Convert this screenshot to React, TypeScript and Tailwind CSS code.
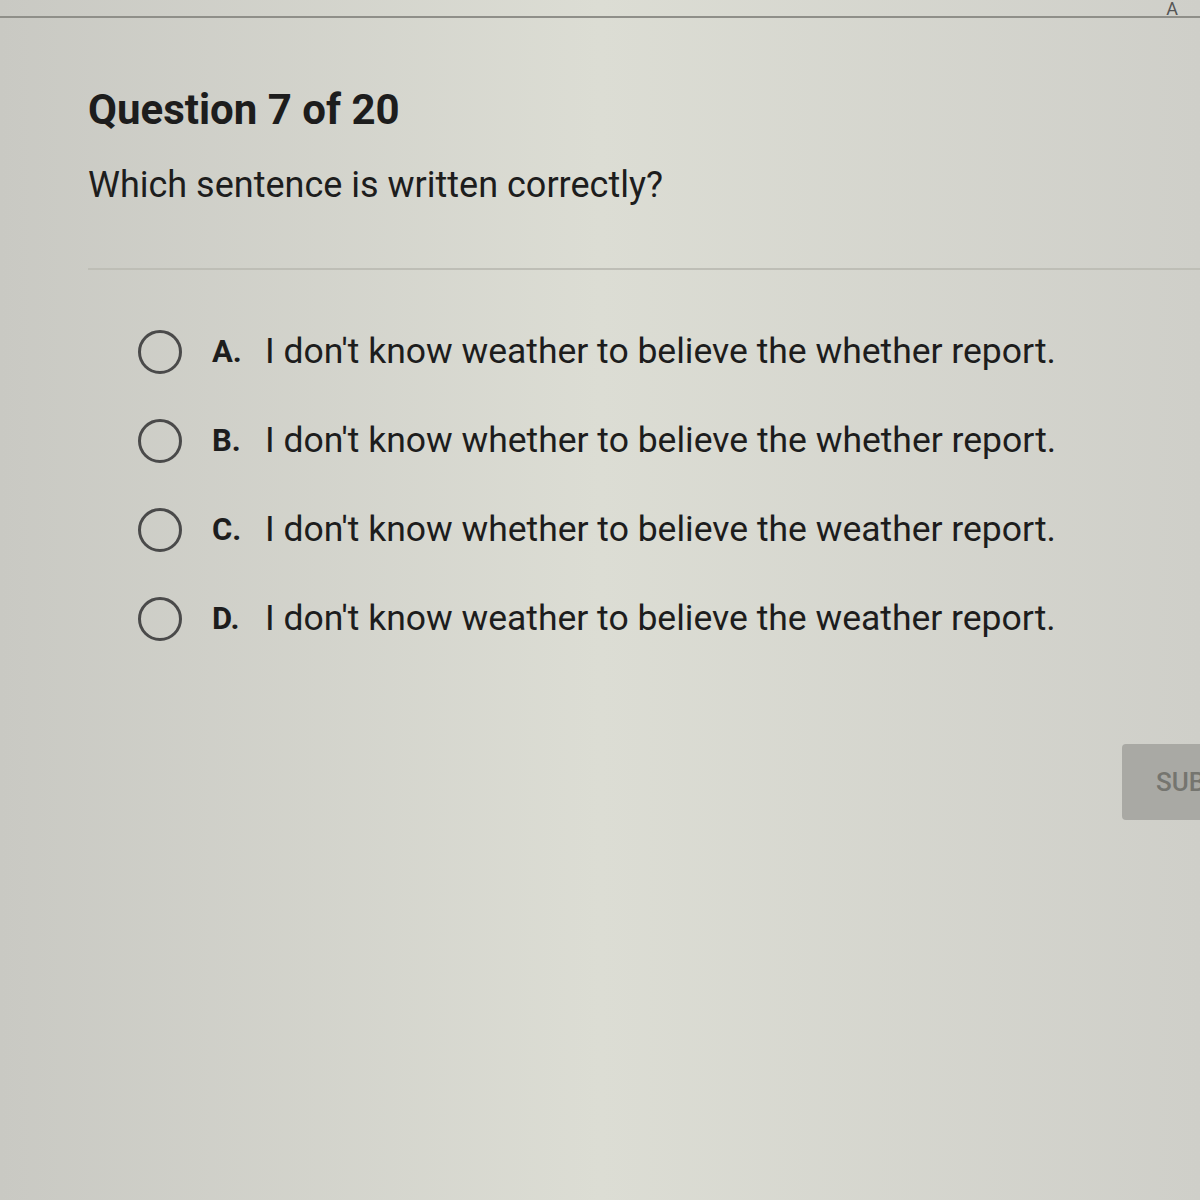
import React from "react";

const options = [
  { letter: "A.", text: "I don't know weather to believe the whether report." },
  { letter: "B.", text: "I don't know whether to believe the whether report." },
  { letter: "C.", text: "I don't know whether to believe the weather report." },
  { letter: "D.", text: "I don't know weather to believe the weather report." },
];

export default function App() {
  const [picked, setPicked] = React.useState<string | null>(null);

  return (
    <div className="w-[1200px] h-[1200px] overflow-hidden bg-linear-to-r from-[#c9c9c3] via-[#dcddd4] to-[#cfcfc9] font-['Roboto',sans-serif] text-[#1d1d1d]">
      <div className="h-[18px] border-b-2 border-[#8f8f89] flex justify-end pr-[22px]">
        <span className="text-[18px] leading-[18px] text-[#555]">A</span>
      </div>

      <div className="pl-[88px] pt-[68px]">
        <h1 className="text-[42px] font-bold leading-[48px]">Question 7 of 20</h1>
        <p className="mt-[29px] text-[36px] leading-[44px]">Which sentence is written correctly?</p>
        <hr className="mt-[61px] border-t-2 border-[#bebeb6]" />

        <div className="mt-[60px] pl-[50px] flex flex-col gap-[45px]">
          {options.map((o) => (
            <label
              key={o.letter}
              className="flex items-center h-[44px] cursor-pointer"
              onClick={() => setPicked(o.letter)}
            >
              <span className="w-[44px] h-[44px] rounded-full border-[3px] border-[#4a4a4a] flex items-center justify-center shrink-0">
                {picked === o.letter && <span className="w-[22px] h-[22px] rounded-full bg-[#4a4a4a]" />}
              </span>
              <span className="ml-[30px] w-[53px] text-[31px] font-bold">{o.letter}</span>
              <span className="text-[35.5px] whitespace-nowrap">{o.text}</span>
            </label>
          ))}
        </div>
      </div>

      <div className="flex justify-end mt-[103px]">
        <button className="w-[120px] h-[76px] -mr-[42px] bg-[#a9a9a4] rounded-[4px] text-left pl-[34px] text-[26px] text-[#75756f] font-medium">
          SUBMIT
        </button>
      </div>
    </div>
  );
}
